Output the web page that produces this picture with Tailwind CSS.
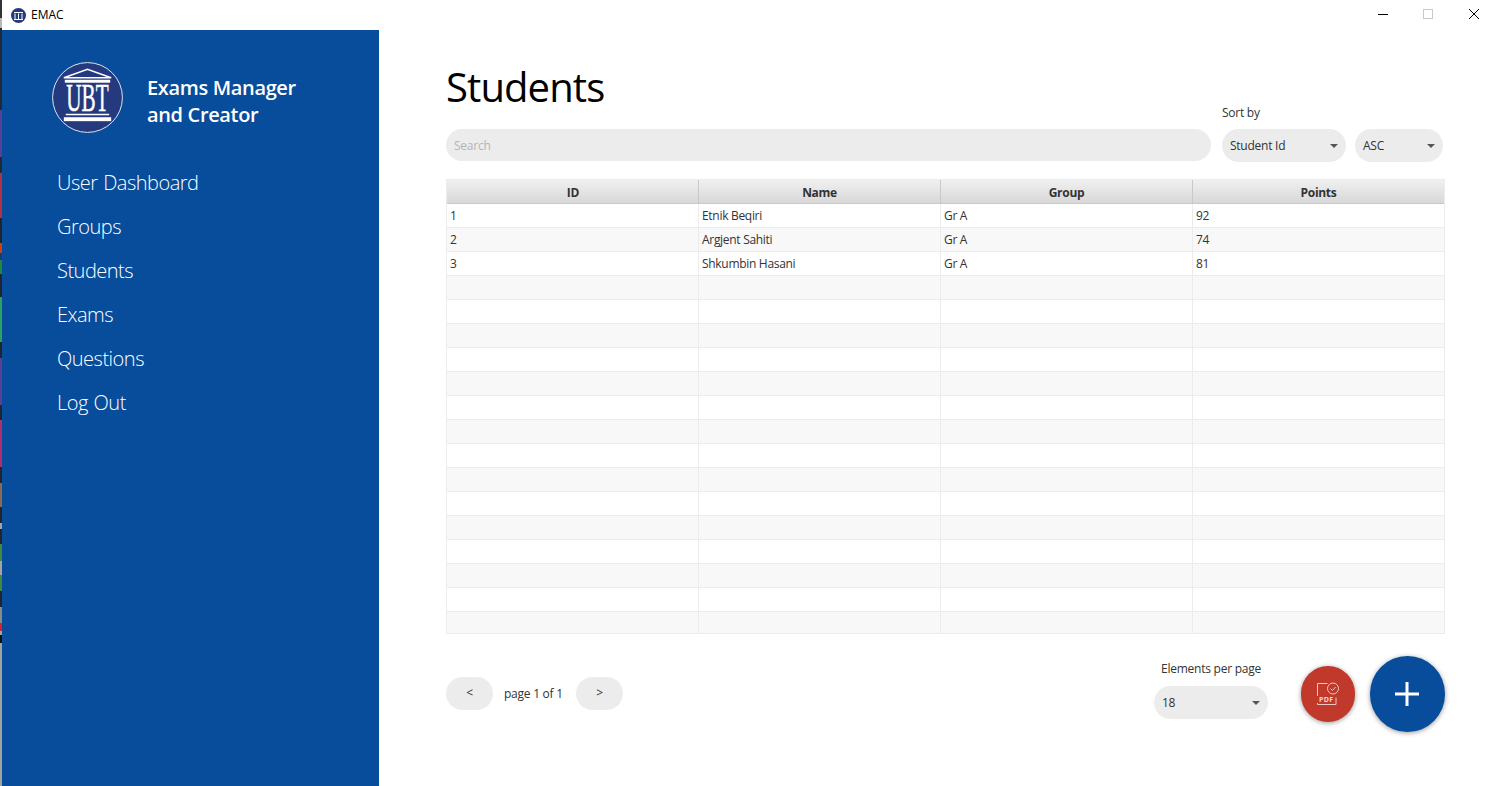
<!DOCTYPE html>
<html lang="en">
<head>
    <meta charset="UTF-8">
    <meta name="viewport" content="width=device-width, initial-scale=1.0">
    <title>EMAC</title>
    <script src="https://cdn.jsdelivr.net/npm/@tailwindcss/browser@4"></script>
</head>
<body class="bg-white font-['Open_Sans',sans-serif] overflow-hidden">

    <div class="flex h-[786px] w-[1497px]">
        <!-- Desktop peeking through on the left edge -->
        <div class="w-[2px] shrink-0 flex flex-col bg-[#a3a3a3]">
            <div class="h-[18px] bg-[#333335]"></div>
            <div class="h-[10px] bg-[#b8b8b8]"></div>
            <div class="h-[82px] bg-[#1d2b38]"></div>
            <div class="h-[47px] bg-[#5b3f96]"></div>
            <div class="h-[16px] bg-[#1d2b38]"></div>
            <div class="h-[45px] bg-[#b5313f]"></div>
            <div class="h-[25px] bg-[#1d2530]"></div>
            <div class="h-[10px] bg-[#d0400f]"></div>
            <div class="h-[7px] bg-[#0f3f7a]"></div>
            <div class="h-[14px] bg-[#1f8a3c]"></div>
            <div class="h-[23px] bg-[#1d2530]"></div>
            <div class="h-[45px] bg-[#2aa35d]"></div>
            <div class="h-[16px] bg-[#1d2530]"></div>
            <div class="h-[47px] bg-[#5b3f96]"></div>
            <div class="h-[15px] bg-[#1d2530]"></div>
            <div class="h-[47px] bg-[#b52c6f]"></div>
            <div class="h-[16px] bg-[#1d2530]"></div>
            <div class="h-[24px] bg-[#8c6a52]"></div>
            <div class="h-[16px] bg-[#1d2530]"></div>
            <div class="h-[6px] bg-[#a3a3a3]"></div>
            <div class="h-[15px] bg-[#1d2530]"></div>
            <div class="h-[17px] bg-[#3f8a3f]"></div>
            <div class="h-[14px] bg-[#a3a3a3]"></div>
            <div class="h-[16px] bg-[#3f8a3f]"></div>
            <div class="h-[16px] bg-[#1d2530]"></div>
            <div class="h-[16px] bg-[#8a8a8a]"></div>
            <div class="h-[8px] bg-[#d8202c]"></div>
            <div class="h-[4px] bg-[#a3a3a3]"></div>
            <div class="h-[8px] bg-[#111111]"></div>
        </div>

        <div class="flex-1 flex flex-col min-w-0">
            <!-- Title bar -->
            <div class="h-[30px] shrink-0 flex items-center bg-white">
                <svg class="ml-[9px] w-[15px] h-[15px]" viewBox="0 0 15 15">
                    <circle cx="7.5" cy="7.5" r="7.5" fill="#25397f"/>
                    <path d="M3 4.5h9M4 5.5v5.5M7.5 5.5v5.5M11 5.5v5.5M3 11.5h9" stroke="#fff" stroke-width="1" fill="none"/>
                </svg>
                <span class="ml-[5px] text-[12px] text-black">EMAC</span>
                <div class="ml-auto flex items-center">
                    <svg class="w-[46px] h-[30px]" viewBox="0 0 46 30"><path d="M19 14.5h10" stroke="#000" fill="none"/></svg>
                    <svg class="w-[46px] h-[30px]" viewBox="0 0 46 30"><rect x="18.5" y="9.5" width="9" height="9" stroke="#c9c9c9" fill="none"/></svg>
                    <svg class="w-[46px] h-[30px]" viewBox="0 0 46 30"><path d="M18 9l10 10M28 9l-10 10" stroke="#000" fill="none"/></svg>
                </div>
            </div>

            <div class="flex-1 flex min-h-0">
                <!-- Sidebar -->
                <aside class="w-[377px] shrink-0 bg-[#084c9c] text-white pt-[32px]">
                    <div class="flex items-start pl-[50px]">
                        <svg class="w-[71px] h-[71px] overflow-visible" viewBox="0 0 72 72">
                            <circle cx="36" cy="36" r="35.4" fill="#25397f" stroke="#dfe4ef" stroke-width="1"/>
                            <path d="M12 16 36 7.5 60 16Z" fill="none" stroke="#fff" stroke-width="1.5"/>
                            <rect x="13" y="18" width="46" height="3" fill="#fff"/>
                            <text x="36" y="50" text-anchor="middle" fill="#fff" stroke="#fff" stroke-width="0.5" font-family="'Liberation Serif',serif" font-size="40" textLength="43" lengthAdjust="spacingAndGlyphs">UBT</text>
                            <rect x="14" y="52.5" width="44" height="1.5" fill="#fff"/>
                            <rect x="12" y="56" width="48" height="4" fill="#fff"/>
                        </svg>
                        <div class="ml-[24px] mt-[12px] text-[20px] leading-[27px] font-semibold tracking-[-0.35px]">Exams Manager<br>and Creator</div>
                    </div>
                    <nav class="mt-[28px] pl-[55px] flex flex-col text-[20px] font-light leading-[44px] tracking-[-0.5px] [word-spacing:1px]">
                        <a href="#">User Dashboard</a>
                        <a href="#">Groups</a>
                        <a href="#">Students</a>
                        <a href="#">Exams</a>
                        <a href="#">Questions</a>
                        <a href="#">Log Out</a>
                    </nav>
                </aside>

                <!-- Main -->
                <main class="flex-1 pl-[67px] pr-[52px] pt-[34px]">
                    <div class="flex items-end gap-[11px] text-[12px] tracking-[-0.25px]">
                        <div class="flex-1">
                            <h1 class="text-[40px] leading-[46px] mb-[19px] text-black tracking-[-0.9px]">Students</h1>
                            <div class="h-[32px] mb-[1px] rounded-full bg-[#ececec] flex items-center px-[8px] pt-[2px] text-[#b5b5b5]">Search</div>
                        </div>
                        <div class="mr-[2px]">
                            <div class="leading-[16px] mb-[8px] text-[#333333]">Sort by</div>
                            <div class="flex gap-[9px]">
                                <div class="w-[124px] h-[33px] rounded-full bg-[#ececec] flex items-center justify-between px-[8px] text-[#333333]">
                                    <span>Student Id</span>
                                    <span class="w-0 h-0 border-x-[4px] border-x-transparent border-t-[4px] border-t-[#555555]"></span>
                                </div>
                                <div class="w-[88px] h-[33px] rounded-full bg-[#ececec] flex items-center justify-between px-[8px] text-[#333333]">
                                    <span>ASC</span>
                                    <span class="w-0 h-0 border-x-[4px] border-x-transparent border-t-[4px] border-t-[#555555]"></span>
                                </div>
                            </div>
                        </div>
                    </div>

                    <!-- Table -->
                    <div class="mt-[17px] border border-[#ececec] text-[12px] tracking-[-0.3px] text-[#333333]" id="students-table">
                        <div class="grid grid-cols-[252px_242px_252px_1fr] h-[24px] border-b border-[#c9c9c9] bg-gradient-to-b from-[#f0f0f0] to-[#d8d8d8] font-bold text-center leading-[26px]">
                            <div class="border-r border-[#c9c9c9] pl-[1px]">ID</div>
                            <div class="border-r border-[#c9c9c9]">Name</div>
                            <div class="border-r border-[#c9c9c9]">Group</div>
                            <div>Points</div>
                        </div>
                        <div id="students-rows"></div>
                    </div>

                    <!-- Footer -->
                    <div class="mt-[22px] h-[76px] flex items-center text-[12px] tracking-[-0.25px] text-[#333333]">
                        <button class="w-[47px] h-[33px] mb-[2px] rounded-full bg-[#ececec]">&lt;</button>
                        <span class="ml-[11px] mr-[12px] w-[60px] whitespace-nowrap">page 1 of 1</span>
                        <button class="w-[47px] h-[33px] mb-[2px] rounded-full bg-[#ececec]">&gt;</button>
                        <div class="ml-auto flex flex-col items-center w-[114px] mb-[8px]">
                            <div class="leading-[16px] mb-[9px] whitespace-nowrap">Elements per page</div>
                            <div class="w-full h-[33px] rounded-full bg-[#ececec] flex items-center justify-between px-[8px]">
                                <span class="pt-[1px]">18</span>
                                <span class="w-0 h-0 border-x-[4px] border-x-transparent border-t-[4px] border-t-[#555555]"></span>
                            </div>
                        </div>
                        <button class="ml-[33px] w-[54px] h-[56px] rounded-full bg-[#c0392b] shadow-[0_1px_5px_rgba(0,0,0,0.4)] flex items-center justify-center">
                            <svg class="w-[22px] h-[24px]" viewBox="0 0 22 24" fill="none" stroke="#f3d6d2" stroke-width="0.9">
                                <path d="M10.5 1.5H.5v21h18.5v-7"/>
                                <circle cx="16" cy="6.5" r="5.5"/>
                                <path d="M13.5 6.5l2 2 3-3.5"/>
                                <rect x="0" y="14" width="18" height="7" fill="#c0392b" stroke="none"/>
                                <text x="2" y="20" font-size="7" font-weight="700" letter-spacing="0.3" fill="#f3d6d2" stroke="none" font-family="'Open Sans',sans-serif">PDF</text>
                            </svg>
                        </button>
                        <button class="ml-[15px] w-[75px] h-[76px] rounded-full bg-[#084c9c] shadow-[0_1px_5px_rgba(0,0,0,0.4)] flex items-center justify-center">
                            <svg class="w-[24px] h-[24px] -ml-[1px]" viewBox="0 0 24 24"><path d="M12 0v24M0 12h24" stroke="#fff" stroke-width="3" fill="none"/></svg>
                        </button>
                    </div>
                </main>
            </div>
        </div>
    </div>

    <script>
        const students = [
            { id: 1, name: 'Etnik Beqiri', group: 'Gr A', points: 92 },
            { id: 2, name: 'Argjent Sahiti', group: 'Gr A', points: 74 },
            { id: 3, name: 'Shkumbin Hasani', group: 'Gr A', points: 81 }
        ];

        // 18 rows per page, the empty ones still show the stripes
        const rows = document.getElementById('students-rows');
        for (let i = 0; i < 18; i++) {
            const s = students[i] || { id: '', name: '', group: '', points: '' };
            const stripe = i % 2 ? 'bg-[#f8f8f8]' : 'bg-white';
            const height = i === 17 ? 'h-[21px]' : 'h-[24px] border-b border-[#ececec]';
            rows.innerHTML += `
                <div class="grid grid-cols-[252px_242px_252px_1fr] leading-[24px] ${stripe} ${height}">
                    <div class="border-r border-[#ececec] pl-[3px]">${s.id}</div>
                    <div class="border-r border-[#ececec] pl-[3px]">${s.name}</div>
                    <div class="border-r border-[#ececec] pl-[3px]">${s.group}</div>
                    <div class="pl-[3px]">${s.points}</div>
                </div>`;
        }
    </script>
</body>
</html>
